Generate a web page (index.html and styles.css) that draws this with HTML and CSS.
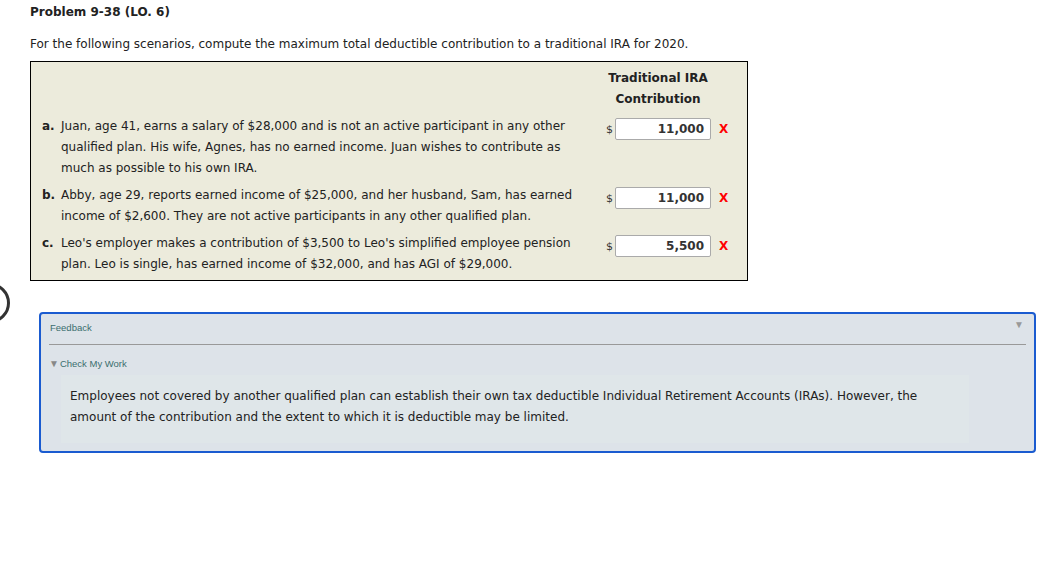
FILE: index.html
```html
<!DOCTYPE html>
<html>
<head>
<meta charset="utf-8">
<link rel="stylesheet" href="styles.css">
</head>
<body>
<div class="page">
  <div class="ring"></div>
  <h1 class="title">Problem 9-38 (LO. 6)</h1>
  <p class="intro">For the following scenarios, compute the maximum total deductible contribution to a traditional IRA for 2020.</p>
  <div class="table">
    <div class="head-spacer"></div>
    <div class="head">Traditional IRA<br>Contribution</div>

    <div class="item"><b class="lbl">a.</b><span>Juan, age 41, earns a salary of $28,000 and is not an active participant in any other qualified plan. His wife, Agnes, has no earned income. Juan wishes to contribute as much as possible to his own IRA.</span></div>
    <div class="answer"><span class="dollar">$</span><span class="input">11,000</span><span class="wrong">X</span></div>

    <div class="item"><b class="lbl">b.</b><span>Abby, age 29, reports earned income of $25,000, and her husband, Sam, has earned income of $2,600. They are not active participants in any other qualified plan.</span></div>
    <div class="answer"><span class="dollar">$</span><span class="input">11,000</span><span class="wrong">X</span></div>

    <div class="item last"><b class="lbl">c.</b><span>Leo's employer makes a contribution of $3,500 to Leo's simplified employee pension plan. Leo is single, has earned income of $32,000, and has AGI of $29,000.</span></div>
    <div class="answer"><span class="dollar">$</span><span class="input">5,500</span><span class="wrong">X</span></div>
  </div>

  <div class="feedback">
    <div class="fb-head"><span>Feedback</span><span class="fb-toggle">&#9660;</span></div>
    <div class="cmw"><span class="tri">&#9660;</span>Check My Work</div>
    <div class="fb-body">Employees not covered by another qualified plan can establish their own tax deductible Individual Retirement Accounts (IRAs). However, the amount of the contribution and the extent to which it is deductible may be limited.</div>
  </div>
</div>
</body>
</html>
```
FILE: styles.css
```css
html, body {
  margin: 0;
  padding: 0;
  background: #ffffff;
}
body {
  font-family: "DejaVu Sans", Verdana, sans-serif;
  font-size: 12px;
  color: #222222;
}
.page {
  position: relative;
  padding: 5px 0 0 30px;
}
.ring {
  position: absolute;
  left: -30px;
  top: 283px;
  width: 34px;
  height: 34px;
  border: 3px solid #333333;
  border-radius: 50%;
}
.title {
  margin: 0;
  font-size: 12px;
  font-weight: bold;
  line-height: 14px;
  color: #222;
}
.intro {
  margin: 18px 0 0 0;
  line-height: 14px;
}
.table {
  margin-top: 10px;
  width: 718px;
  border: 1px solid #000;
  background: #ecebdc;
  display: grid;
  grid-template-columns: 560px 156px;
  padding-bottom: 5px;
  box-sizing: border-box;
}
.head {
  font-weight: bold;
  text-align: center;
  line-height: 21px;
  padding: 6px 0 6px 0;
  margin-left: -22px;
}
.item {
  display: flex;
  padding-left: 11px;
  line-height: 21px;
  margin-bottom: 6px;
}
.item.last {
  margin-bottom: 0;
}
.item .lbl {
  width: 19px;
  flex: none;
}
.answer {
  display: flex;
  align-items: flex-start;
  padding-left: 15px;
  padding-top: 2px;
}
.dollar {
  width: 9px;
  line-height: 21px;
  margin-top: 1px;
  font-size: 11px;
  color: #333;
}
.input {
  display: block;
  width: 96px;
  height: 22px;
  box-sizing: border-box;
  background: #fff;
  border: 1px solid #aaa;
  border-radius: 2px;
  font-weight: bold;
  text-align: right;
  padding-right: 6px;
  line-height: 20px;
  color: #333;
}
.wrong {
  color: #ff0000;
  font-weight: bold;
  font-size: 12px;
  margin-left: 8px;
  line-height: 22px;
}
.feedback {
  margin: 31px 0 0 9px;
  width: 997px;
  box-sizing: border-box;
  border: 2px solid #1a5bd0;
  border-radius: 4px;
  background: #dde3e9;
  padding: 0 8px 8px 8px;
  font-family: "Liberation Sans", Arial, sans-serif;
}
.fb-head {
  display: flex;
  justify-content: space-between;
  align-items: flex-start;
  font-size: 9.5px;
  color: #3b6e6e;
  height: 22px;
  padding-top: 8px;
  border-bottom: 1px solid #999;
  padding-left: 1px;
}
.fb-toggle {
  font-size: 10px;
  line-height: 10px;
  color: #999;
  margin-top: -2px;
  margin-right: 2px;
}
.cmw {
  font-size: 9.5px;
  color: #3b6e6e;
  margin-top: 13px;
  line-height: 12px;
}
.cmw .tri {
  font-size: 10px;
  color: #888;
  margin-right: 1px;
  vertical-align: 0;
}
.fb-body {
  margin: 5px 57px 0 12px;
  background: #dfe6e9;
  padding: 11px 9px 15px 9px;
  font-family: "DejaVu Sans", Verdana, sans-serif;
  font-size: 12px;
  line-height: 21px;
  color: #222;
}
```
